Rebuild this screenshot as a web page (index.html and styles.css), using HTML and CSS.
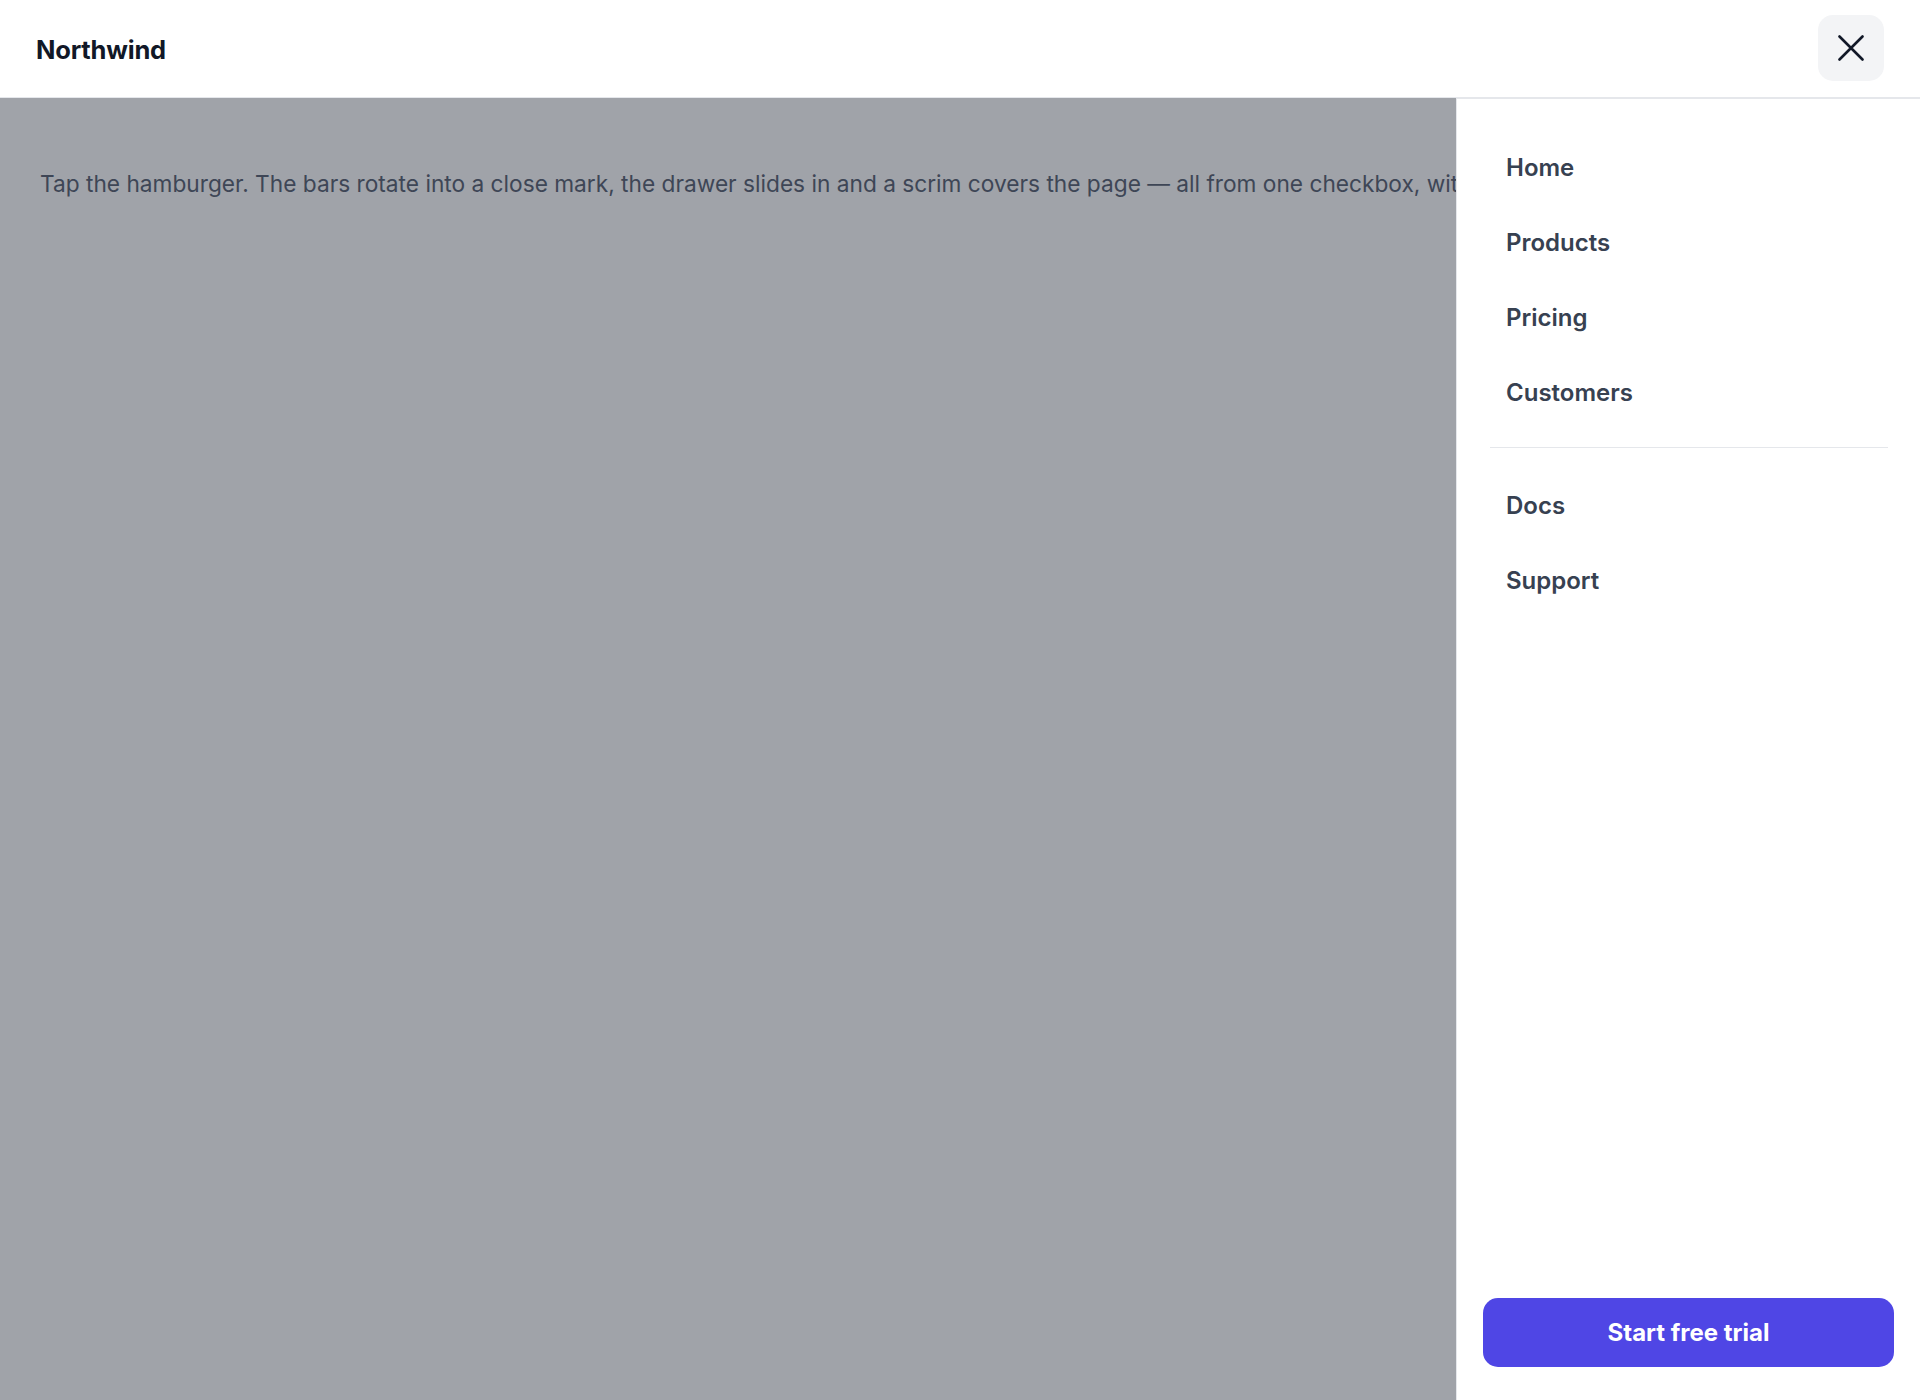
FILE: index.html
```html
<!DOCTYPE html>
<html lang="en">
<head>
<meta charset="utf-8">
<title>Northwind</title>
<link rel="stylesheet" href="styles.css">
</head>
<body>
<header class="topbar">
  <div class="brand">Northwind</div>
  <button class="close-btn" aria-label="Close menu">
    <svg width="26" height="26" viewBox="0 0 26 26" fill="none" stroke="#111827" stroke-width="2.6" stroke-linecap="round">
      <path d="M1.5 1.5 L24.5 24.5 M24.5 1.5 L1.5 24.5"/>
    </svg>
  </button>
</header>
<main class="content">
  <p class="lead">Tap the hamburger. The bars rotate into a close mark, the drawer slides in and a scrim covers the page — all from one checkbox, with no JavaScript.</p>
</main>
<div class="scrim"></div>
<aside class="drawer">
  <nav class="drawer-nav">
    <a class="nav-link" href="#">Home</a>
    <a class="nav-link" href="#">Products</a>
    <a class="nav-link" href="#">Pricing</a>
    <a class="nav-link" href="#">Customers</a>
    <hr class="divider">
    <a class="nav-link" href="#">Docs</a>
    <a class="nav-link" href="#">Support</a>
  </nav>
  <div class="drawer-foot">
    <a class="cta" href="#">Start free trial</a>
  </div>
</aside>
</body>
</html>
```

FILE: styles.css
```css
* { box-sizing: border-box; }
html, body { margin: 0; padding: 0; }
body {
  width: 1920px;
  height: 1400px;
  overflow: hidden;
  font-family: Inter, "Noto Sans", "Liberation Sans", sans-serif;
  background: #ffffff;
  color: #111827;
  position: relative;
}
.topbar {
  height: 98px;
  border-bottom: 1px solid #e5e7eb;
  display: flex;
  align-items: center;
  justify-content: space-between;
  padding: 0 36px;
  background: #ffffff;
  position: relative;
  z-index: 3;
}
.brand {
  font-size: 25.5px;
  font-weight: 700;
  color: #111827;
  letter-spacing: -0.2px;
  margin-top: 2px;
}
.close-btn {
  width: 66px;
  height: 66px;
  border: none;
  border-radius: 15px;
  background: #f3f4f6;
  display: flex;
  align-items: center;
  justify-content: center;
  padding: 0;
  margin-top: -1px;
}
.close-btn svg { display: block; }
.content {
  width: 1456px;
  overflow: hidden;
  padding: 0 0 0 40px;
}
.lead {
  margin: 0;
  padding-top: 68px;
  font-size: 22.7px;
  line-height: 35px;
  color: #5d6575;
  white-space: nowrap;
}
.scrim {
  position: absolute;
  left: 0;
  right: 0;
  top: 98px;
  bottom: 0;
  background: rgba(17, 24, 39, 0.4);
  z-index: 1;
}
.drawer {
  position: absolute;
  top: 98px;
  right: 0;
  bottom: 0;
  width: 464px;
  background: #ffffff;
  border-left: 1px solid #e5e7eb;
  border-top: 1px solid #e5e7eb;
  z-index: 2;
  display: flex;
  flex-direction: column;
  justify-content: space-between;
}
.drawer-nav {
  display: flex;
  flex-direction: column;
  padding: 31px 32px 0 33px;
}
.nav-link {
  display: block;
  padding: 19px 16px;
  font-size: 24px;
  line-height: 37px;
  font-weight: 600;
  color: #374151;
  text-decoration: none;
}
.divider {
  border: none;
  border-top: 1px solid #e5e7eb;
  margin: 17px 0 20px;
  height: 0;
}
.drawer-foot {
  padding: 0 26px 33px 26px;
}
.cta {
  display: flex;
  align-items: center;
  justify-content: center;
  height: 69px;
  border-radius: 15px;
  background: #4f46e5;
  color: #ffffff;
  font-size: 24px;
  font-weight: 700;
  text-decoration: none;
}
```
